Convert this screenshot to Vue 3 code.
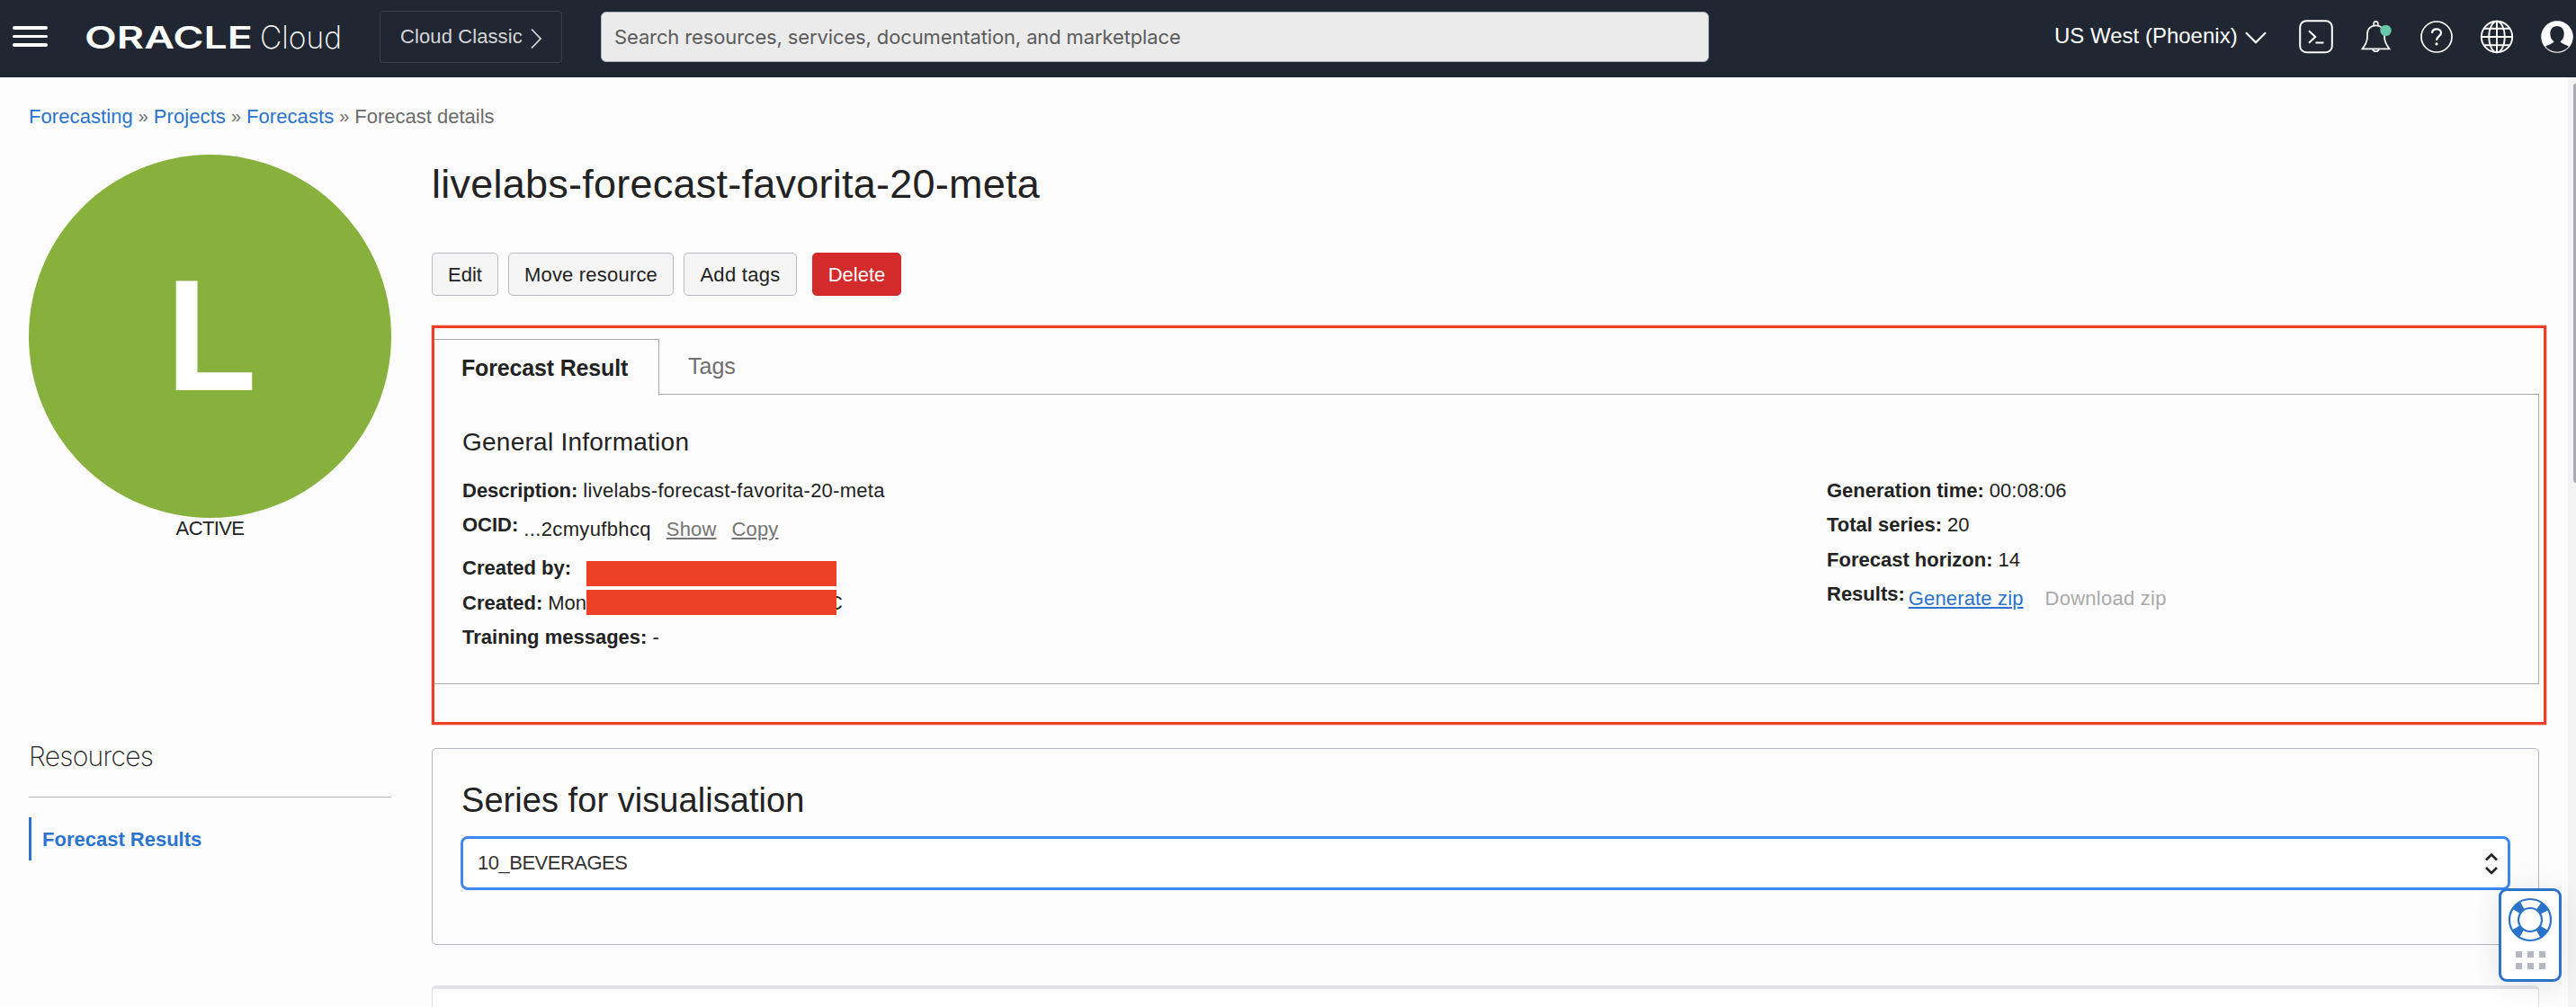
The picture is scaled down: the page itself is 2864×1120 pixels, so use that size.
<script setup>
import { ref } from 'vue'

const crumbs = ['Forecasting', 'Projects', 'Forecasts']
const series = ref('10_BEVERAGES')
</script>

<template>
  <div class="page">
    <header class="topbar">
      <div class="burger"><i></i><i></i><i></i></div>
      <svg class="logo" width="290" height="56" viewBox="0 0 290 56">
        <text class="brand" x="2" y="39" textLength="187" lengthAdjust="spacingAndGlyphs">ORACLE</text>
        <text class="product" x="197" y="39" textLength="91" lengthAdjust="spacingAndGlyphs">Cloud</text>
      </svg>
      <div class="classic">
        <span>Cloud Classic</span>
        <svg width="14" height="24" viewBox="0 0 14 24"><path d="M2 1.500 12 12 2 22.500" fill="none" stroke="#d4d6d8" stroke-width="1.800" /></svg>
      </div>
      <div class="search">Search resources, services, documentation, and marketplace</div>
      <div class="region">
        <span>US West (Phoenix)</span>
        <svg width="24" height="14" viewBox="0 0 24 14"><path d="M1 1.200 12 12.200 23 1.200" fill="none" stroke="#fff" stroke-width="2.200" /></svg>
      </div>
      <nav class="tools">
        <svg class="terminal" width="38" height="38" viewBox="0 0 38 38" fill="none" stroke="#fff" stroke-width="2">
          <rect x="1.200" y="1.200" width="35.600" height="35" rx="7" />
          <path d="M11 12.200 18.200 19 11 25.800M18.500 25.600H27.500" />
        </svg>
        <svg class="bell" width="38" height="38" viewBox="0 0 38 38" fill="none" stroke="#fff" stroke-width="1.700">
          <path d="M3.500 32.300C6.500 28.500 9 24 9 19V15.500C9 9.800 13 6.300 18.500 6.300S28 9.800 28 15.500V19C28 24 30.500 28.500 33.500 32.300Z" />
          <path d="M16.200 6V3.600A2.400 2.400 0 0 1 20.800 3.600V6M15 32.500A3.600 3.600 0 0 0 22 32.500" />
          <circle cx="29.500" cy="12" r="6.200" fill="#67c6ab" stroke="none" />
        </svg>
        <svg class="help" width="38" height="38" viewBox="0 0 38 38" fill="none" stroke="#fff" stroke-width="1.700">
          <circle cx="19" cy="19" r="17" />
          <path d="M14 15C14 11.800 16.200 10.400 19 10.400S24 12 24 14.700C24 18.300 19 18.200 19 23" stroke-width="2.200" />
          <circle cx="19" cy="26.800" r="1.600" fill="#fff" stroke="none" />
        </svg>
        <svg class="globe" width="38" height="38" viewBox="0 0 38 38" fill="none" stroke="#fff" stroke-width="1.900">
          <circle cx="19" cy="19" r="17.200" />
          <ellipse cx="19" cy="19" rx="8.800" ry="17.200" />
          <path d="M19 2V36M2 19H36M4.500 9.700H33.500M4.500 28.300H33.500" />
        </svg>
        <svg class="user" width="38" height="38" viewBox="0 0 38 38">
          <circle cx="19" cy="19" r="17.800" fill="#fff" />
          <path d="M19 7C23.800 7 26.700 10.500 26.700 15.500C26.700 19.500 25 22.500 22.500 24.200C24.500 27 28.500 27.300 32 29.800C28.700 33.500 24.200 35.700 19 35.700S9.300 33.500 6 29.800C9.500 27.300 13.500 27 15.500 24.200C13 22.500 11.300 19.500 11.300 15.500C11.300 10.500 14.200 7 19 7Z" fill="#212732" />
        </svg>
      </nav>
    </header>

    <div class="content">
      <div class="crumbs">
        <template v-for="c in crumbs" :key="c"><a>{{ c }}</a><span class="sep">»</span></template>
        <span>Forecast details</span>
      </div>

      <div class="columns">
        <aside>
          <div class="avatar"><span>L</span></div>
          <div class="status">ACTIVE</div>
          <h3>Resources</h3>
          <a class="side-link">Forecast Results</a>
        </aside>

        <main>
          <h1>livelabs-forecast-favorita-20-meta</h1>
          <div class="actions">
            <button class="edit">Edit</button>
            <button class="move">Move resource</button>
            <button class="tag">Add tags</button>
            <button class="delete">Delete</button>
          </div>

          <section class="details">
            <div class="tabs">
              <div class="tab active">Forecast Result</div>
              <div class="tab">Tags</div>
            </div>
            <div class="panel">
              <h2>General Information</h2>
              <div class="info">
                <div class="col left">
                  <div class="row"><b>Description:</b><span class="desc">livelabs-forecast-favorita-20-meta</span></div>
                  <div class="row tall"><b class="ocid">OCID:</b><span class="low id">...2cmyufbhcq</span><a class="low quiet show">Show</a><a class="low quiet copy">Copy</a></div>
                  <div class="row"><b class="by">Created by:</b><i class="redact upper"></i></div>
                  <div class="row"><b>Created:</b><span class="date">Mon</span><span class="zone">C</span><i class="redact lower"></i></div>
                  <div class="row"><b class="training">Training messages:</b><span>-</span></div>
                </div>
                <div class="col">
                  <div class="row"><b>Generation time:</b><span>00:08:06</span></div>
                  <div class="row"><b>Total series:</b><span>20</span></div>
                  <div class="row"><b>Forecast horizon:</b><span>14</span></div>
                  <div class="row"><b>Results:</b><a class="low generate">Generate zip</a><span class="low download">Download zip</span></div>
                </div>
              </div>
            </div>
            <div class="highlight"></div>
          </section>

          <section class="series">
            <h2>Series for visualisation</h2>
            <div class="select">
              <span>{{ series }}</span>
              <svg width="14" height="26" viewBox="0 0 14 26" fill="none" stroke="#222" stroke-width="2.600"><path d="M1 8.500 7 2.500 13 8.500M1 17 7 23 13 17" /></svg>
            </div>
          </section>

          <section class="next"></section>
        </main>
      </div>
    </div>

    <div class="scrollbar"><div class="thumb"></div></div>

    <div class="support">
      <svg width="50" height="50" viewBox="0 0 50 50" fill="none" stroke="#2b73c9">
        <circle cx="25" cy="25" r="18.200" stroke-width="10.500" stroke-dasharray="9.200 19.388" stroke-dashoffset="-9.694" />
        <circle cx="25" cy="25" r="23" stroke-width="2.200" />
        <circle cx="25" cy="25" r="13" stroke-width="2.200" />
      </svg>
      <div class="grip"><i v-for="n in 6" :key="n"></i></div>
    </div>
  </div>
</template>

<style>
body {
  background: #fcfcfc;
  overflow: hidden;
}
</style>

<style scoped>
.page {
  position: relative;
  width: 2864px;
  height: 1120px;
  overflow: hidden;
  background: #fcfcfc;
  color: #222;
  font: 22px "Liberation Sans", Arial, sans-serif;
}
.page * {
  box-sizing: border-box;
}
h1,
h2,
h3 {
  margin: 0;
  font-weight: 400;
}
svg {
  display: block;
  flex: none;
}

/* top bar */
.topbar {
  display: flex;
  align-items: flex-start;
  height: 86px;
  background: #212732;
  color: #fff;
  white-space: nowrap;
}
.burger {
  display: flex;
  flex-direction: column;
  gap: 6px;
  width: 39px;
  margin: 29px 0 0 14px;
}
.burger i {
  height: 3.500px;
  border-radius: 2px;
  background: #fff;
}
.logo {
  margin: 15px 0 0 39px;
  overflow: visible;
}
.brand {
  font: 600 34px Inter, sans-serif;
  fill: #fff;
}
.product {
  font: 200 35px Inter, sans-serif;
  fill: #fff;
}
.classic {
  display: flex;
  align-items: flex-start;
  width: 203px;
  height: 58px;
  margin: 12px 0 0 40px;
  padding-left: 22px;
  border: 1px solid #3b424e;
  border-radius: 4px;
  color: #d4d6d8;
  line-height: 56px;
  letter-spacing: 0.100px;
}
.classic span {
  width: 144px;
}
.classic svg {
  margin-top: 18px;
}
.search {
  width: 1232px;
  height: 56px;
  margin: 13px 0 0 43px;
  padding-left: 14px;
  border: 1px solid #aeb4be;
  border-radius: 6px;
  background: #ebebeb;
  color: #5c5c5c;
  font: 22px/54px Inter, sans-serif;
  letter-spacing: -0.130px;
}
.region {
  display: flex;
  width: 272px;
  margin-left: 384px;
  font-size: 24px;
  line-height: 79px;
}
.region span {
  width: 212px;
}
.region svg {
  margin-top: 35px;
}
.tools {
  display: flex;
  gap: 29px;
  margin-top: 22px;
}

/* layout */
.content {
  padding-left: 32px;
}
.crumbs {
  display: flex;
  height: 86px;
  line-height: 87px;
  color: #6b6b6b;
}
.crumbs a {
  color: #2b73cd;
  letter-spacing: 0.080px;
}
.sep {
  width: 23px;
  text-align: center;
  font-size: 20px;
}
.columns {
  display: flex;
  gap: 45px;
}
aside {
  width: 403px;
}
.avatar {
  display: flex;
  justify-content: center;
  width: 403px;
  height: 404px;
  border-radius: 50%;
  background: #87b03d;
  color: #fff;
  font-size: 177px;
  font-weight: 700;
  line-height: 402px;
}
.avatar span {
  margin-left: 4px;
  transform: scaleX(0.930);
}
.status {
  height: 24px;
  text-align: center;
  line-height: 23px;
  letter-spacing: -0.600px;
}
h3 {
  height: 87px;
  margin-top: 200px;
  border-bottom: 1px solid #b3b8c0;
  font: 200 30px/82px Inter, sans-serif;
  letter-spacing: -0.700px;
}
.side-link {
  display: block;
  height: 48px;
  margin-top: 22px;
  padding-left: 12px;
  border-left: 3px solid #2b73cd;
  color: #2b73cd;
  font-weight: 700;
  line-height: 49px;
}

main {
  width: 2343px;
}
h1 {
  height: 109px;
  font-size: 45px;
  line-height: 66px;
  letter-spacing: 0.240px;
}
.actions {
  display: flex;
}
button {
  height: 48px;
  padding: 1px 0 0;
  border: 1px solid #b8bbc3;
  border-radius: 5px;
  background: #f5f5f5;
  color: #222;
  font: inherit;
}
.edit {
  width: 74px;
}
.move {
  width: 184px;
  margin-left: 11px;
  letter-spacing: 0.200px;
}
.tag {
  width: 126px;
  margin-left: 11px;
  letter-spacing: 0.300px;
}
.delete {
  width: 99px;
  margin-left: 17px;
  border-color: #d32b2b;
  background: #d32b2b;
  color: #fff;
}

/* details */
.details {
  position: relative;
  margin-top: 48px;
}
.tabs {
  display: flex;
  height: 61px;
  font-size: 25px;
}
.tab {
  padding-left: 32px;
  color: #6f6f6f;
  line-height: 61px;
}
.tab.active {
  z-index: 1;
  width: 253px;
  height: 63px;
  border: 1px solid #a9a9a9;
  border-bottom: 0;
  background: #fcfcfc;
  color: #222;
  font-weight: 700;
  letter-spacing: -0.160px;
  line-height: 62px;
}
.panel {
  height: 323px;
  padding: 32px 0 0 33px;
  border: 1px solid #a9a9a9;
}
h2 {
  font-size: 28px;
  line-height: 42px;
  letter-spacing: 0.250px;
}
.info {
  display: flex;
  margin-top: 13.500px;
}
.left {
  width: 1517px;
}
.row {
  position: relative;
  display: flex;
  height: 38.500px;
  line-height: 38.500px;
  white-space: nowrap;
}
.row b {
  margin-right: 6px;
}
.row.tall {
  height: 48px;
}
.desc {
  letter-spacing: 0.260px;
}
.low {
  padding-top: 5px;
  line-height: 38px;
  letter-spacing: 0.150px;
}
.id {
  letter-spacing: 0.350px;
}
.quiet {
  color: #757575;
}
.show,
.copy,
.generate {
  text-decoration: underline;
  text-decoration-thickness: 2px;
  text-underline-offset: 2px;
}
.show,
.copy {
  margin-left: 17px;
}
.generate {
  margin-left: -2px;
  color: #2b73cd;
}
.download {
  margin-left: 24px;
  color: #aaa;
  letter-spacing: 0.250px;
}
.redact {
  position: absolute;
  left: 138px;
  width: 278px;
  height: 28px;
  background: #ec4126;
}
.upper {
  top: 11px;
}
.lower {
  top: 4px;
}
.zone {
  margin-left: 269px;
}
.highlight {
  position: absolute;
  z-index: 2;
  top: -15px;
  left: 0;
  width: 2351px;
  height: 444px;
  border: 3px solid #ec4126;
  box-shadow: 0 0 0 0.500px #ec412680;
}

/* series */
.series {
  height: 219px;
  margin-top: 71px;
  padding: 31px 32px 0;
  border: 1px solid #b3b8c0;
  border-radius: 5px;
}
.series h2 {
  height: 66px;
  font-size: 38px;
  line-height: 53px;
  letter-spacing: 0.050px;
}
.select {
  display: flex;
  justify-content: space-between;
  width: 2279px;
  height: 60px;
  margin-left: -1px;
  padding: 0 11px 0 16px;
  border: 3px solid #3f87f5;
  border-radius: 8px;
  background: #fff;
  color: #333;
  line-height: 54px;
  letter-spacing: -0.500px;
}
.select svg {
  margin-top: 15px;
}
.next {
  height: 60px;
  margin-top: 45px;
  border: 1px solid #dedee4;
  border-top: 4px solid #e2e2e8;
  border-radius: 5px;
  background: #fff;
}

/* overlays */
.scrollbar {
  position: absolute;
  top: 86px;
  right: 0;
  width: 9px;
  height: 1034px;
  padding: 7px 0 0 6px;
  background: #f3f3f5;
}
.thumb {
  height: 444px;
  border-radius: 4px 0 0 4px;
  background: #a9adb3;
}
.support {
  position: absolute;
  top: 988px;
  left: 2778px;
  width: 70px;
  height: 104px;
  padding: 7px 0 0 7px;
  border: 3px solid #2b73c9;
  border-radius: 9px;
  background: #fff;
  box-shadow: 0 4px 32px rgba(0, 0, 0, 0.090);
}
.grip {
  display: grid;
  grid-template-columns: repeat(3, 7px);
  gap: 6px;
  margin: 10px 0 0 9px;
}
.grip i {
  height: 7px;
  background: #b3b8c0;
}
</style>
